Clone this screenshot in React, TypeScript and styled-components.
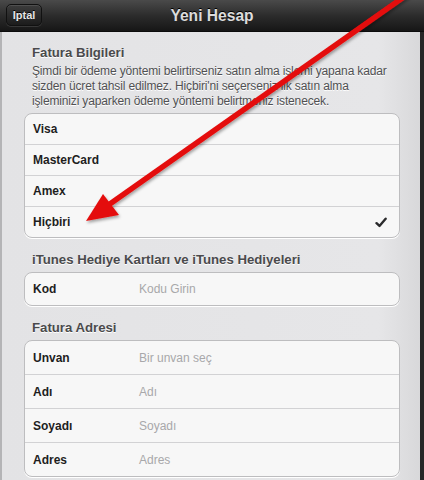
import React from 'react'
import styled, { createGlobalStyle } from 'styled-components'

const GlobalStyle = createGlobalStyle`
  html, body {
    margin: 0;
    padding: 0;
    background: #1c1c1c;
  }
  body {
    font-family: 'Liberation Sans', Arial, sans-serif;
  }
`

type Row = { label: string; placeholder?: string; checked?: boolean }

const payments: Row[] = [
  { label: 'Visa' },
  { label: 'MasterCard' },
  { label: 'Amex' },
  { label: 'Hiçbiri', checked: true }
]

const address: Row[] = [
  { label: 'Unvan', placeholder: 'Bir unvan seç' },
  { label: 'Adı', placeholder: 'Adı' },
  { label: 'Soyadı', placeholder: 'Soyadı' },
  { label: 'Adres', placeholder: 'Adres' }
]

export default function App() {
  return (
    <>
      <GlobalStyle />
      <Page>
        <NavBar>
          <BarButton>Iptal</BarButton>
          <Title>Yeni Hesap</Title>
        </NavBar>
        <Panel>
          <SectionTitle>Fatura Bilgileri</SectionTitle>
          <Description>
            Şimdi bir ödeme yöntemi belirtirseniz satın alma işlemi yapana kadar
            <br />
            sizden ücret tahsil edilmez. Hiçbiri'ni seçerseniz ilk satın alma
            <br />
            işleminizi yaparken ödeme yöntemi belirtmeniz istenecek.
          </Description>
          <Group>
            {payments.map((row) => (
              <Cell key={row.label} $height={30}>
                <Label>{row.label}</Label>
                {row.checked && (
                  <Check viewBox='0 0 14 12'>
                    <path d='M1.8 6.8 L5.2 10 L12.4 1.6' />
                  </Check>
                )}
              </Cell>
            ))}
          </Group>

          <SectionTitle $gap={13}>
            iTunes Hediye Kartları ve iTunes Hediyeleri
          </SectionTitle>
          <Group>
            <Cell $height={32}>
              <Label>Kod</Label>
              <Placeholder>Kodu Girin</Placeholder>
            </Cell>
          </Group>

          <SectionTitle $gap={13}>Fatura Adresi</SectionTitle>
          <Group>
            {address.map((row) => (
              <Cell key={row.label} $height={33}>
                <Label>{row.label}</Label>
                <Placeholder>{row.placeholder}</Placeholder>
              </Cell>
            ))}
          </Group>
        </Panel>

        {/* annotation arrow drawn over the screen */}
        <Arrow viewBox='0 0 424 480'>
          <defs>
            <filter id='shadow' x='-10%' y='-10%' width='120%' height='120%'>
              <feDropShadow dx='1' dy='2' stdDeviation='1.5' floodColor='#000' floodOpacity='0.35' />
            </filter>
          </defs>
          <g filter='url(#shadow)'>
            <path d='M408 -6 L107 206' stroke='#e4100e' strokeWidth='5.5' strokeLinecap='round' />
            <polygon points='86,221 103,194 119,215' fill='#e4100e' />
          </g>
        </Arrow>
      </Page>
    </>
  )
}

const Page = styled.div`
  position: relative;
  width: 424px;
  height: 480px;
  overflow: hidden;
  display: flex;
  flex-direction: column;
  background: #262626;
`

const NavBar = styled.header`
  height: 32px;
  flex-shrink: 0;
  display: flex;
  align-items: center;
  justify-content: center;
  position: relative;
  background: linear-gradient(#4a4a4a 0%, #2c2c2c 50%, #161616 100%);
  border-bottom: 1px solid #0c0c0c;
  box-sizing: border-box;
`

const BarButton = styled.div`
  position: absolute;
  left: 6px;
  top: 4px;
  width: 36px;
  height: 22px;
  box-sizing: border-box;
  display: flex;
  align-items: center;
  justify-content: center;
  border-radius: 5px;
  border: 1px solid #111;
  background: linear-gradient(#3c3c3c, #1c1c1c);
  box-shadow: 0 1px 0 rgba(255, 255, 255, 0.12), inset 0 1px 0 rgba(255, 255, 255, 0.1);
  color: #e6e6e6;
  font-size: 11px;
  font-weight: bold;
  text-shadow: 0 -1px 0 #000;
`

const Title = styled.h1`
  margin: 0;
  font-size: 15.6px;
  font-weight: bold;
  color: #dcdcdc;
  text-shadow: 0 -1px 0 #000;
`

const Panel = styled.main`
  flex: 1;
  margin-right: 4px;
  border-left: 2px solid #b4b4b6;
  padding: 12px 20px 0 22px;
  background: linear-gradient(90deg, #e3e3e5 0%, #e6e6e8 90%, #d8d8da 100%);
  display: flex;
  flex-direction: column;
`

const SectionTitle = styled.h2<{ $gap?: number }>`
  margin: ${(p) => p.$gap ?? 0}px 0 0 8px;
  font-size: 13.2px;
  line-height: 17px;
  font-weight: bold;
  color: #4a4a4c;
  text-shadow: 0 1px 0 #fff;
`

const Description = styled.p`
  margin: 3px 0 0 8px;
  font-size: 12px;
  letter-spacing: -0.15px;
  line-height: 15px;
  color: #505052;
  text-shadow: 0 1px 0 #fff;
  white-space: nowrap;
`

const Group = styled.div`
  margin-top: 4px;
  border: 1px solid #bdbdbf;
  border-radius: 8px;
  background: #f7f7f7;
  overflow: hidden;
  box-shadow: 0 1px 0 #fff;
`

const Cell = styled.div<{ $height: number }>`
  height: ${(p) => p.$height}px;
  display: flex;
  align-items: center;
  padding: 0 12px 0 8px;
  & + & {
    border-top: 1px solid #d2d2d4;
  }
`

const Label = styled.span`
  width: 106px;
  flex-shrink: 0;
  font-size: 12px;
  font-weight: bold;
  color: #1e1e1e;
`

const Placeholder = styled.span`
  font-size: 12px;
  color: #a8a8aa;
`

const Check = styled.svg`
  margin-left: auto;
  width: 12px;
  height: 11px;
  path {
    fill: none;
    stroke: #2a2a2c;
    stroke-width: 2.8;
    stroke-linecap: round;
    stroke-linejoin: round;
  }
`

const Arrow = styled.svg`
  position: absolute;
  inset: 0;
  width: 424px;
  height: 480px;
  pointer-events: none;
`
